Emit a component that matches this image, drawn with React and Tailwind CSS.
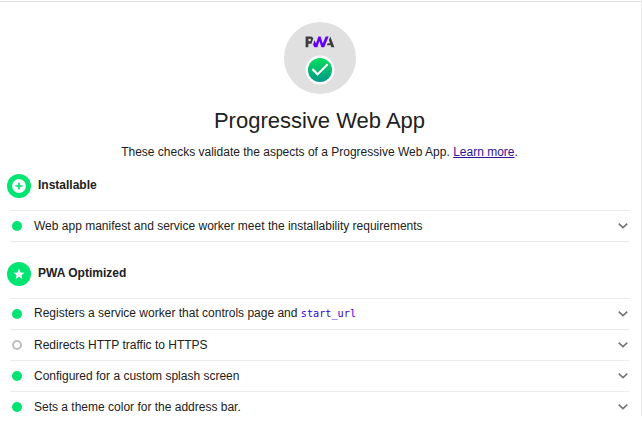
function PwaGauge() {
  return (
    <svg className="block size-[72px]" viewBox="0 0 60 60">
      <defs>
        <linearGradient id="check-gradient" x1="50%" x2="50%" y1="0%" y2="100%">
          <stop offset="0%" stopColor="#00e05c" />
          <stop offset="100%" stopColor="#009688" />
        </linearGradient>
      </defs>
      <circle cx="30" cy="30" r="30" fill="#e0e0e0" />
      <path fill="#3d3d3d" d="M35.66 19.39l.7-1.75h2L37.4 15 38.6 12l3.4 9h-2.51l-.58-1.61z" />
      <path fill="#6200ff" d="M33.52 21l3.65-9h-2.42l-2.5 5.82L30.5 12h-1.86l-1.9 5.82-1.35-2.65-1.21 3.72L25.4 21h2.38l1.72-5.2 1.64 5.2z" />
      <path fill="#3d3d3d" fillRule="evenodd" d="M20.3 18.1h1.48c.45 0 .85-.05 1.2-.15l.39-1.18 1.07-3.3a2.64 2.64 0 0 0-.28-.37c-.55-.7-1.36-1.1-2.42-1.1H18v9h2.3zm1.9-3.9c.2.2.3.45.3.75s-.1.55-.29.75c-.2.2-.55.3-1.05.3h-.76v-2.1h.77c.5 0 .83.1 1.03.3z" />
      <g transform="translate(18 28)">
        <circle cx="12" cy="12" r="12" fill="#fff" />
        <circle cx="12" cy="12" r="10" fill="url(#check-gradient)" />
        <path fill="#fff" d="M10 16.8l-4.9-4.9 1.3-1.3L10 14.2l7.7-7.7L19 7.8z" />
      </g>
    </svg>
  );
}

function PlusBadge() {
  return (
    <svg className="size-6 shrink-0" viewBox="0 0 24 24">
      <circle cx="12" cy="12" r="12" fill="#00e572" />
      <circle cx="12" cy="12" r="6.9" fill="#fff" />
      <path d="M12 8.4v7.2M8.4 12h7.2" stroke="#00e572" strokeWidth="1.7" />
    </svg>
  );
}

function StarBadge() {
  return (
    <svg className="size-6 shrink-0" viewBox="0 0 24 24">
      <circle cx="12" cy="12" r="12" fill="#00e572" />
      <path fill="#fff" d="M12 14.8l3.4 2.2-.95-3.8 3-2.5-3.9-.3L12 6.8l-1.55 3.6-3.9.3 3 2.5L8.6 17z" />
    </svg>
  );
}

function Chevron() {
  return (
    <svg className="mr-[1px] h-[6px] w-[10px]" viewBox="0 0 10 6">
      <path d="M.7 .6L5 4.6 9.3 .6" fill="none" stroke="#757575" strokeWidth="1.6" />
    </svg>
  );
}

function Audit({ neutral, children }) {
  return (
    <li className="flex h-[31px] items-center border-t border-[#ebebeb] pl-0.5">
      <span
        className={
          neutral
            ? "size-[10px] rounded-full border-2 border-[#bdbdbd]"
            : "size-[10px] rounded-full bg-[#00e572]"
        }
      />
      <span className="ml-3 flex-1 whitespace-pre">{children}</span>
      <Chevron />
    </li>
  );
}

function GroupTitle({ icon, children }) {
  return (
    <h2 className="flex h-6 pl-[7px] font-bold">
      {icon}
      <span className="ml-[7px] leading-[22px]">{children}</span>
    </h2>
  );
}

export default function App() {
  return (
    <div className="h-[446px] w-[642px] bg-white font-['Liberation_Sans',Arial,sans-serif] text-[12px] text-[#212121]">
      <main className="h-[416px] border-r border-[#ebebeb] pt-px">
        <hr className="border-t border-[#e0e0e0]" />
        <header className="flex flex-col items-center pt-5 pr-px">
          <PwaGauge />
          <h1 className="mt-[11px] pr-px text-[22px] leading-8">Progressive Web App</h1>
          <p className="mt-[6px] pr-px leading-[18px]">
            These checks validate the aspects of a Progressive Web App.{" "}
            <a className="text-[#33119a] underline" href="#learn">Learn more</a>.
          </p>
        </header>
        <section className="mt-[13px]">
          <GroupTitle icon={<PlusBadge />}>Installable</GroupTitle>
          <ul className="mt-3 mr-3 ml-[10px] border-b border-[#ebebeb]">
            <Audit>Web app manifest and service worker meet the installability requirements</Audit>
          </ul>
        </section>
        <section className="mt-5">
          <GroupTitle icon={<StarBadge />}>PWA Optimized</GroupTitle>
          <ul className="mt-3 mr-3 ml-[10px]">
            <Audit>
              <span className="block pb-[2px]">
                Registers a service worker that controls page and{" "}
                <code className="font-['DejaVu_Sans_Mono',monospace] text-[10.2px] leading-none text-[#3800dc]">start_url</code>
              </span>
            </Audit>
            <Audit neutral>Redirects HTTP traffic to HTTPS</Audit>
            <Audit>Configured for a custom splash screen</Audit>
            <Audit>Sets a theme color for the address bar.</Audit>
          </ul>
        </section>
      </main>
    </div>
  );
}
